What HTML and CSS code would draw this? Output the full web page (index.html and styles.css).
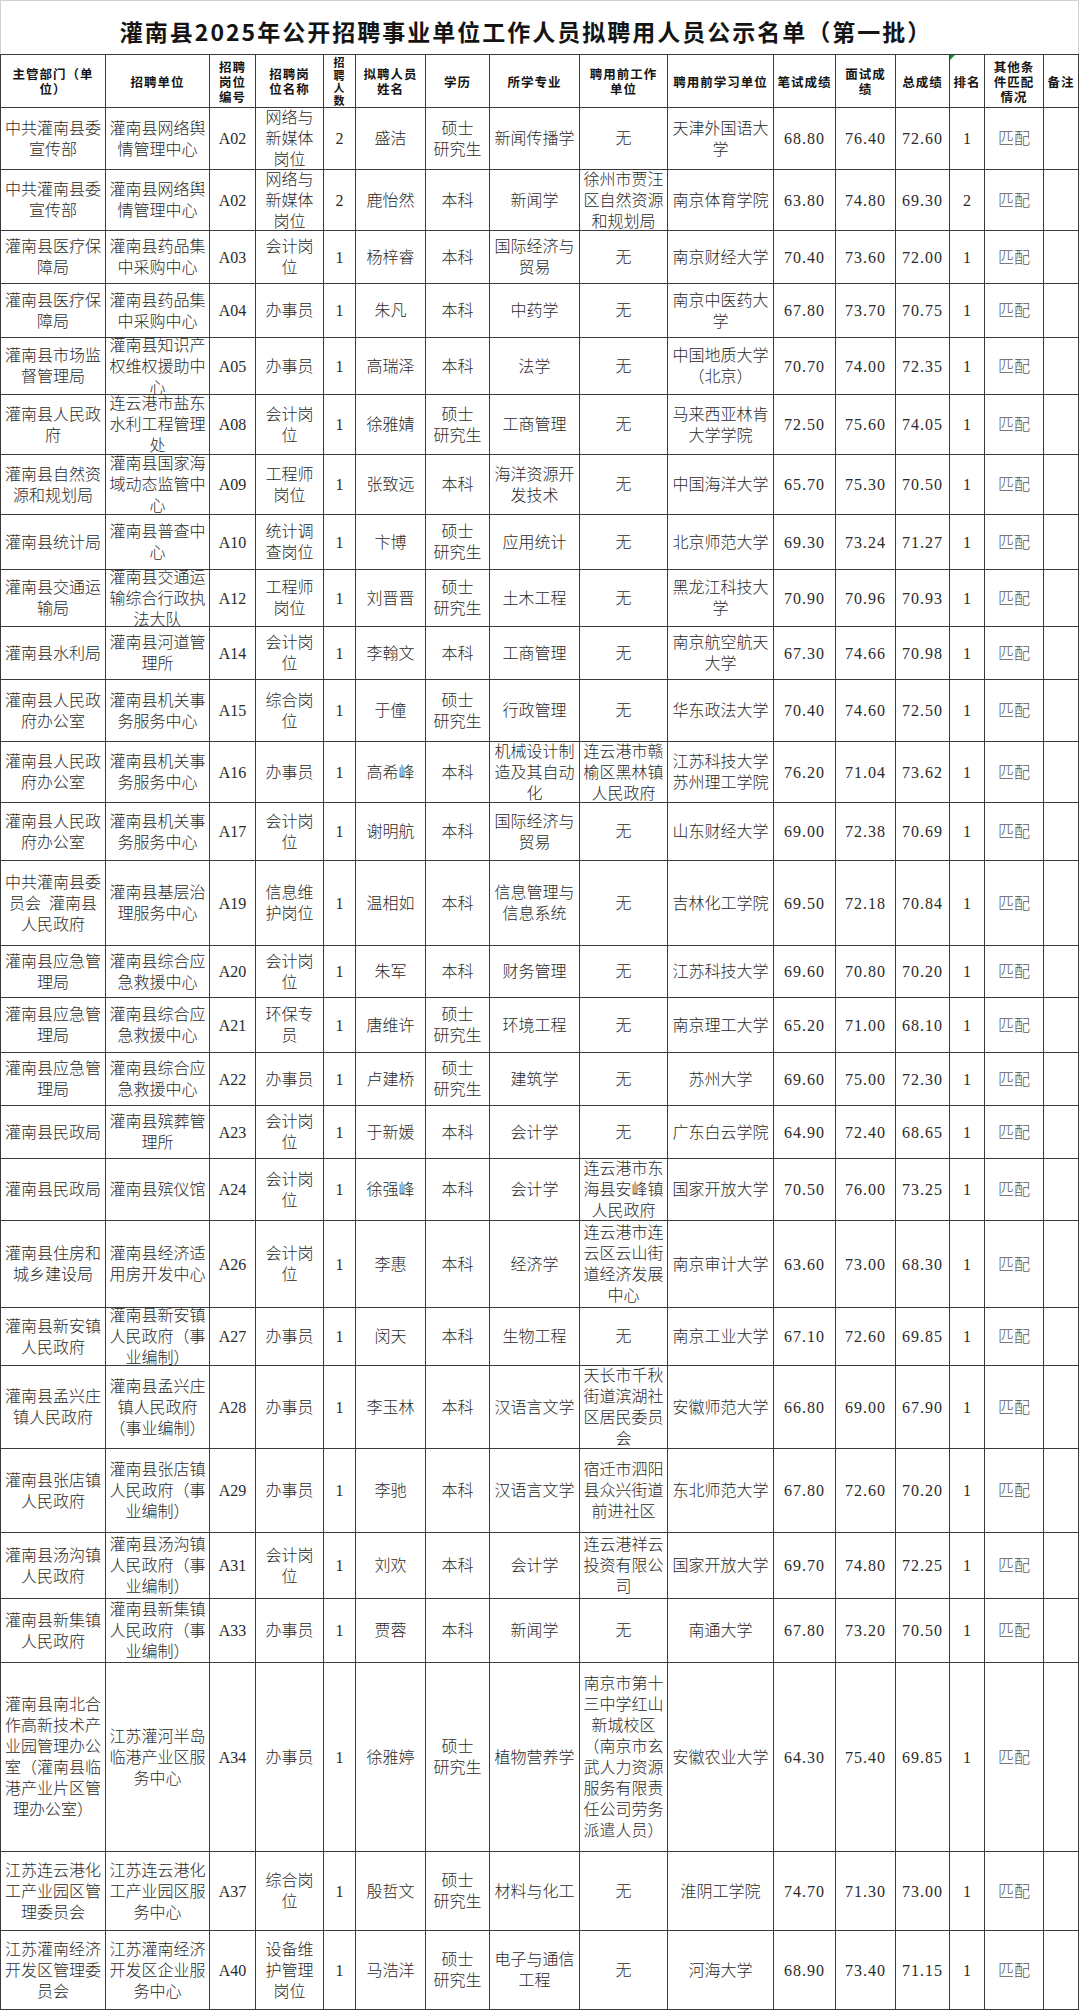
FILE: index.html
```html
<!DOCTYPE html>
<html lang="zh-CN">
<head>
<meta charset="utf-8">
<title>灌南县2025年公开招聘事业单位工作人员拟聘用人员公示名单（第一批）</title>
<link rel="stylesheet" href="styles.css">
</head>
<body>
<div class="page">
  <div class="title"><span>灌南县2025年公开招聘事业单位工作人员拟聘用人员公示名单（第一批）</span></div>
  <div class="sheet">
    <div class="c h">主管部门（单<br>位）</div>
    <div class="c h">招聘单位</div>
    <div class="c h">招聘<br>岗位<br>编号</div>
    <div class="c h">招聘岗<br>位名称</div>
    <div class="c h tall">招<br>聘<br>人<br>数</div>
    <div class="c h">拟聘人员<br>姓名</div>
    <div class="c h">学历</div>
    <div class="c h">所学专业</div>
    <div class="c h">聘用前工作<br>单位</div>
    <div class="c h">聘用前学习单位</div>
    <div class="c h">笔试成绩</div>
    <div class="c h">面试成<br>绩</div>
    <div class="c h">总成绩</div>
    <div class="c h flag">排名</div>
    <div class="c h">其他条<br>件匹配<br>情况</div>
    <div class="c h">备注</div>

    <div class="c">中共灌南县委<br>宣传部</div><div class="c">灌南县网络舆<br>情管理中心</div><div class="c code">A02</div><div class="c">网络与<br>新媒体<br>岗位</div><div class="c">2</div><div class="c">盛洁</div><div class="c">硕士<br>研究生</div><div class="c">新闻传播学</div><div class="c">无</div><div class="c">天津外国语大<br>学</div><div class="c n">68.80</div><div class="c n">76.40</div><div class="c n">72.60</div><div class="c">1</div><div class="c m">匹配</div><div class="c"></div>

    <div class="c">中共灌南县委<br>宣传部</div><div class="c">灌南县网络舆<br>情管理中心</div><div class="c code">A02</div><div class="c">网络与<br>新媒体<br>岗位</div><div class="c">2</div><div class="c">鹿怡然</div><div class="c">本科</div><div class="c">新闻学</div><div class="c">徐州市贾汪<br>区自然资源<br>和规划局</div><div class="c">南京体育学院</div><div class="c n">63.80</div><div class="c n">74.80</div><div class="c n">69.30</div><div class="c">2</div><div class="c m">匹配</div><div class="c"></div>

    <div class="c">灌南县医疗保<br>障局</div><div class="c">灌南县药品集<br>中采购中心</div><div class="c code">A03</div><div class="c">会计岗<br>位</div><div class="c">1</div><div class="c">杨梓睿</div><div class="c">本科</div><div class="c">国际经济与<br>贸易</div><div class="c">无</div><div class="c">南京财经大学</div><div class="c n">70.40</div><div class="c n">73.60</div><div class="c n">72.00</div><div class="c">1</div><div class="c m">匹配</div><div class="c"></div>

    <div class="c">灌南县医疗保<br>障局</div><div class="c">灌南县药品集<br>中采购中心</div><div class="c code">A04</div><div class="c">办事员</div><div class="c">1</div><div class="c">朱凡</div><div class="c">本科</div><div class="c">中药学</div><div class="c">无</div><div class="c">南京中医药大<br>学</div><div class="c n">67.80</div><div class="c n">73.70</div><div class="c n">70.75</div><div class="c">1</div><div class="c m">匹配</div><div class="c"></div>

    <div class="c">灌南县市场监<br>督管理局</div><div class="c">灌南县知识产<br>权维权援助中<br>心</div><div class="c code">A05</div><div class="c">办事员</div><div class="c">1</div><div class="c">高瑞泽</div><div class="c">本科</div><div class="c">法学</div><div class="c">无</div><div class="c">中国地质大学<br>（北京）</div><div class="c n">70.70</div><div class="c n">74.00</div><div class="c n">72.35</div><div class="c">1</div><div class="c m">匹配</div><div class="c"></div>

    <div class="c">灌南县人民政<br>府</div><div class="c">连云港市盐东<br>水利工程管理<br>处</div><div class="c code">A08</div><div class="c">会计岗<br>位</div><div class="c">1</div><div class="c">徐雅婧</div><div class="c">硕士<br>研究生</div><div class="c">工商管理</div><div class="c">无</div><div class="c">马来西亚林肯<br>大学学院</div><div class="c n">72.50</div><div class="c n">75.60</div><div class="c n">74.05</div><div class="c">1</div><div class="c m">匹配</div><div class="c"></div>

    <div class="c">灌南县自然资<br>源和规划局</div><div class="c">灌南县国家海<br>域动态监管中<br>心</div><div class="c code">A09</div><div class="c">工程师<br>岗位</div><div class="c">1</div><div class="c">张致远</div><div class="c">本科</div><div class="c">海洋资源开<br>发技术</div><div class="c">无</div><div class="c">中国海洋大学</div><div class="c n">65.70</div><div class="c n">75.30</div><div class="c n">70.50</div><div class="c">1</div><div class="c m">匹配</div><div class="c"></div>

    <div class="c">灌南县统计局</div><div class="c">灌南县普查中<br>心</div><div class="c code">A10</div><div class="c">统计调<br>查岗位</div><div class="c">1</div><div class="c">卞博</div><div class="c">硕士<br>研究生</div><div class="c">应用统计</div><div class="c">无</div><div class="c">北京师范大学</div><div class="c n">69.30</div><div class="c n">73.24</div><div class="c n">71.27</div><div class="c">1</div><div class="c m">匹配</div><div class="c"></div>

    <div class="c">灌南县交通运<br>输局</div><div class="c">灌南县交通运<br>输综合行政执<br>法大队</div><div class="c code">A12</div><div class="c">工程师<br>岗位</div><div class="c">1</div><div class="c">刘晋晋</div><div class="c">硕士<br>研究生</div><div class="c">土木工程</div><div class="c">无</div><div class="c">黑龙江科技大<br>学</div><div class="c n">70.90</div><div class="c n">70.96</div><div class="c n">70.93</div><div class="c">1</div><div class="c m">匹配</div><div class="c"></div>

    <div class="c">灌南县水利局</div><div class="c">灌南县河道管<br>理所</div><div class="c code">A14</div><div class="c">会计岗<br>位</div><div class="c">1</div><div class="c">李翰文</div><div class="c">本科</div><div class="c">工商管理</div><div class="c">无</div><div class="c">南京航空航天<br>大学</div><div class="c n">67.30</div><div class="c n">74.66</div><div class="c n">70.98</div><div class="c">1</div><div class="c m">匹配</div><div class="c"></div>

    <div class="c">灌南县人民政<br>府办公室</div><div class="c">灌南县机关事<br>务服务中心</div><div class="c code">A15</div><div class="c">综合岗<br>位</div><div class="c">1</div><div class="c">于僮</div><div class="c">硕士<br>研究生</div><div class="c">行政管理</div><div class="c">无</div><div class="c">华东政法大学</div><div class="c n">70.40</div><div class="c n">74.60</div><div class="c n">72.50</div><div class="c">1</div><div class="c m">匹配</div><div class="c"></div>

    <div class="c">灌南县人民政<br>府办公室</div><div class="c">灌南县机关事<br>务服务中心</div><div class="c code">A16</div><div class="c">办事员</div><div class="c">1</div><div class="c">高希峰</div><div class="c">本科</div><div class="c">机械设计制<br>造及其自动<br>化</div><div class="c">连云港市赣<br>榆区黑林镇<br>人民政府</div><div class="c">江苏科技大学<br>苏州理工学院</div><div class="c n">76.20</div><div class="c n">71.04</div><div class="c n">73.62</div><div class="c">1</div><div class="c m">匹配</div><div class="c"></div>

    <div class="c">灌南县人民政<br>府办公室</div><div class="c">灌南县机关事<br>务服务中心</div><div class="c code">A17</div><div class="c">会计岗<br>位</div><div class="c">1</div><div class="c">谢明航</div><div class="c">本科</div><div class="c">国际经济与<br>贸易</div><div class="c">无</div><div class="c">山东财经大学</div><div class="c n">69.00</div><div class="c n">72.38</div><div class="c n">70.69</div><div class="c">1</div><div class="c m">匹配</div><div class="c"></div>

    <div class="c">中共灌南县委<br>员会&nbsp;&nbsp;灌南县<br>人民政府</div><div class="c">灌南县基层治<br>理服务中心</div><div class="c code">A19</div><div class="c">信息维<br>护岗位</div><div class="c">1</div><div class="c">温相如</div><div class="c">本科</div><div class="c">信息管理与<br>信息系统</div><div class="c">无</div><div class="c">吉林化工学院</div><div class="c n">69.50</div><div class="c n">72.18</div><div class="c n">70.84</div><div class="c">1</div><div class="c m">匹配</div><div class="c"></div>

    <div class="c">灌南县应急管<br>理局</div><div class="c">灌南县综合应<br>急救援中心</div><div class="c code">A20</div><div class="c">会计岗<br>位</div><div class="c">1</div><div class="c">朱军</div><div class="c">本科</div><div class="c">财务管理</div><div class="c">无</div><div class="c">江苏科技大学</div><div class="c n">69.60</div><div class="c n">70.80</div><div class="c n">70.20</div><div class="c">1</div><div class="c m">匹配</div><div class="c"></div>

    <div class="c">灌南县应急管<br>理局</div><div class="c">灌南县综合应<br>急救援中心</div><div class="c code">A21</div><div class="c">环保专<br>员</div><div class="c">1</div><div class="c">唐维许</div><div class="c">硕士<br>研究生</div><div class="c">环境工程</div><div class="c">无</div><div class="c">南京理工大学</div><div class="c n">65.20</div><div class="c n">71.00</div><div class="c n">68.10</div><div class="c">1</div><div class="c m">匹配</div><div class="c"></div>

    <div class="c">灌南县应急管<br>理局</div><div class="c">灌南县综合应<br>急救援中心</div><div class="c code">A22</div><div class="c">办事员</div><div class="c">1</div><div class="c">卢建桥</div><div class="c">硕士<br>研究生</div><div class="c">建筑学</div><div class="c">无</div><div class="c">苏州大学</div><div class="c n">69.60</div><div class="c n">75.00</div><div class="c n">72.30</div><div class="c">1</div><div class="c m">匹配</div><div class="c"></div>

    <div class="c">灌南县民政局</div><div class="c">灌南县殡葬管<br>理所</div><div class="c code">A23</div><div class="c">会计岗<br>位</div><div class="c">1</div><div class="c">于新媛</div><div class="c">本科</div><div class="c">会计学</div><div class="c">无</div><div class="c">广东白云学院</div><div class="c n">64.90</div><div class="c n">72.40</div><div class="c n">68.65</div><div class="c">1</div><div class="c m">匹配</div><div class="c"></div>

    <div class="c">灌南县民政局</div><div class="c">灌南县殡仪馆</div><div class="c code">A24</div><div class="c">会计岗<br>位</div><div class="c">1</div><div class="c">徐强峰</div><div class="c">本科</div><div class="c">会计学</div><div class="c">连云港市东<br>海县安峰镇<br>人民政府</div><div class="c">国家开放大学</div><div class="c n">70.50</div><div class="c n">76.00</div><div class="c n">73.25</div><div class="c">1</div><div class="c m">匹配</div><div class="c"></div>

    <div class="c">灌南县住房和<br>城乡建设局</div><div class="c">灌南县经济适<br>用房开发中心</div><div class="c code">A26</div><div class="c">会计岗<br>位</div><div class="c">1</div><div class="c">李惠</div><div class="c">本科</div><div class="c">经济学</div><div class="c">连云港市连<br>云区云山街<br>道经济发展<br>中心</div><div class="c">南京审计大学</div><div class="c n">63.60</div><div class="c n">73.00</div><div class="c n">68.30</div><div class="c">1</div><div class="c m">匹配</div><div class="c"></div>

    <div class="c">灌南县新安镇<br>人民政府</div><div class="c">灌南县新安镇<br>人民政府（事<br>业编制）</div><div class="c code">A27</div><div class="c">办事员</div><div class="c">1</div><div class="c">闵天</div><div class="c">本科</div><div class="c">生物工程</div><div class="c">无</div><div class="c">南京工业大学</div><div class="c n">67.10</div><div class="c n">72.60</div><div class="c n">69.85</div><div class="c">1</div><div class="c m">匹配</div><div class="c"></div>

    <div class="c">灌南县孟兴庄<br>镇人民政府</div><div class="c">灌南县孟兴庄<br>镇人民政府<br>（事业编制）</div><div class="c code">A28</div><div class="c">办事员</div><div class="c">1</div><div class="c">李玉林</div><div class="c">本科</div><div class="c">汉语言文学</div><div class="c">天长市千秋<br>街道滨湖社<br>区居民委员<br>会</div><div class="c">安徽师范大学</div><div class="c n">66.80</div><div class="c n">69.00</div><div class="c n">67.90</div><div class="c">1</div><div class="c m">匹配</div><div class="c"></div>

    <div class="c">灌南县张店镇<br>人民政府</div><div class="c">灌南县张店镇<br>人民政府（事<br>业编制）</div><div class="c code">A29</div><div class="c">办事员</div><div class="c">1</div><div class="c">李驰</div><div class="c">本科</div><div class="c">汉语言文学</div><div class="c">宿迁市泗阳<br>县众兴街道<br>前进社区</div><div class="c">东北师范大学</div><div class="c n">67.80</div><div class="c n">72.60</div><div class="c n">70.20</div><div class="c">1</div><div class="c m">匹配</div><div class="c"></div>

    <div class="c">灌南县汤沟镇<br>人民政府</div><div class="c">灌南县汤沟镇<br>人民政府（事<br>业编制）</div><div class="c code">A31</div><div class="c">会计岗<br>位</div><div class="c">1</div><div class="c">刘欢</div><div class="c">本科</div><div class="c">会计学</div><div class="c">连云港祥云<br>投资有限公<br>司</div><div class="c">国家开放大学</div><div class="c n">69.70</div><div class="c n">74.80</div><div class="c n">72.25</div><div class="c">1</div><div class="c m">匹配</div><div class="c"></div>

    <div class="c">灌南县新集镇<br>人民政府</div><div class="c">灌南县新集镇<br>人民政府（事<br>业编制）</div><div class="c code">A33</div><div class="c">办事员</div><div class="c">1</div><div class="c">贾蓉</div><div class="c">本科</div><div class="c">新闻学</div><div class="c">无</div><div class="c">南通大学</div><div class="c n">67.80</div><div class="c n">73.20</div><div class="c n">70.50</div><div class="c">1</div><div class="c m">匹配</div><div class="c"></div>

    <div class="c">灌南县南北合<br>作高新技术产<br>业园管理办公<br>室（灌南县临<br>港产业片区管<br>理办公室）</div><div class="c">江苏灌河半岛<br>临港产业区服<br>务中心</div><div class="c code">A34</div><div class="c">办事员</div><div class="c">1</div><div class="c">徐雅婷</div><div class="c">硕士<br>研究生</div><div class="c">植物营养学</div><div class="c">南京市第十<br>三中学红山<br>新城校区<br>（南京市玄<br>武人力资源<br>服务有限责<br>任公司劳务<br>派遣人员）</div><div class="c">安徽农业大学</div><div class="c n">64.30</div><div class="c n">75.40</div><div class="c n">69.85</div><div class="c">1</div><div class="c m">匹配</div><div class="c"></div>

    <div class="c">江苏连云港化<br>工产业园区管<br>理委员会</div><div class="c">江苏连云港化<br>工产业园区服<br>务中心</div><div class="c code">A37</div><div class="c">综合岗<br>位</div><div class="c">1</div><div class="c">殷哲文</div><div class="c">硕士<br>研究生</div><div class="c">材料与化工</div><div class="c">无</div><div class="c">淮阴工学院</div><div class="c n">74.70</div><div class="c n">71.30</div><div class="c n">73.00</div><div class="c">1</div><div class="c m">匹配</div><div class="c"></div>

    <div class="c">江苏灌南经济<br>开发区管理委<br>员会</div><div class="c">江苏灌南经济<br>开发区企业服<br>务中心</div><div class="c code">A40</div><div class="c">设备维<br>护管理<br>岗位</div><div class="c">1</div><div class="c">马浩洋</div><div class="c">硕士<br>研究生</div><div class="c">电子与通信<br>工程</div><div class="c">无</div><div class="c">河海大学</div><div class="c n">68.90</div><div class="c n">73.40</div><div class="c n">71.15</div><div class="c">1</div><div class="c m">匹配</div><div class="c"></div>
  </div>
</div>
</body>
</html>
```

FILE: styles.css
```css
:root {
  --line: #3a3a3a;
}

html, body {
  margin: 0;
  padding: 0;
  background: #ffffff;
}

.page {
  width: 1079px;
}

.title {
  box-sizing: border-box;
  height: 54px;
  border: 1px solid #d2d2d2;
  border-bottom: none;
  display: flex;
  align-items: center;
  justify-content: center;
  padding: 6px 27px 0 0;
  font-family: "Noto Sans CJK SC", sans-serif;
  font-weight: 700;
  font-size: 23px;
  letter-spacing: 2px;
  color: #141414;
  white-space: nowrap;
}

.sheet {
  display: grid;
  grid-template-columns: 104px 103px 45px 67px 31px 69px 63px 89px 87px 105px 61px 59px 53px 34px 58px 34px;
  grid-template-rows: 52px 61px 60px 52px 53px 56px 59px 59px 54px 56px 52px 61px 60px 57px 84px 51px 54px 52px 52px 61px 86px 57px 82px 83px 65px 63px 188px 78px 78px;
  gap: 1px;
  background: var(--line);
  border: 1px solid var(--line);
}

.c {
  position: relative;
  background: #ffffff;
  display: flex;
  align-items: center;
  justify-content: center;
  text-align: center;
  overflow: hidden;
  white-space: nowrap;
  font-family: "Liberation Serif", "Noto Sans CJK SC", serif;
  font-size: 16px;
  font-weight: 300;
  line-height: 21px;
  color: #2a2a2a;
}

.h {
  font-family: "Noto Sans CJK SC", sans-serif;
  font-weight: 700;
  font-size: 12.5px;
  line-height: 15px;
  letter-spacing: 1px;
  color: #151515;
}

.tall {
  font-size: 11px;
  line-height: 12.5px;
}

.flag::before {
  content: "";
  position: absolute;
  top: 0;
  left: 0;
  border-top: 5px solid #1f8a3b;
  border-right: 5px solid transparent;
}

.n {
  letter-spacing: 1px;
}

.code {
  letter-spacing: 0;
}

.m {
  color: #5a5a5a;
}
```
